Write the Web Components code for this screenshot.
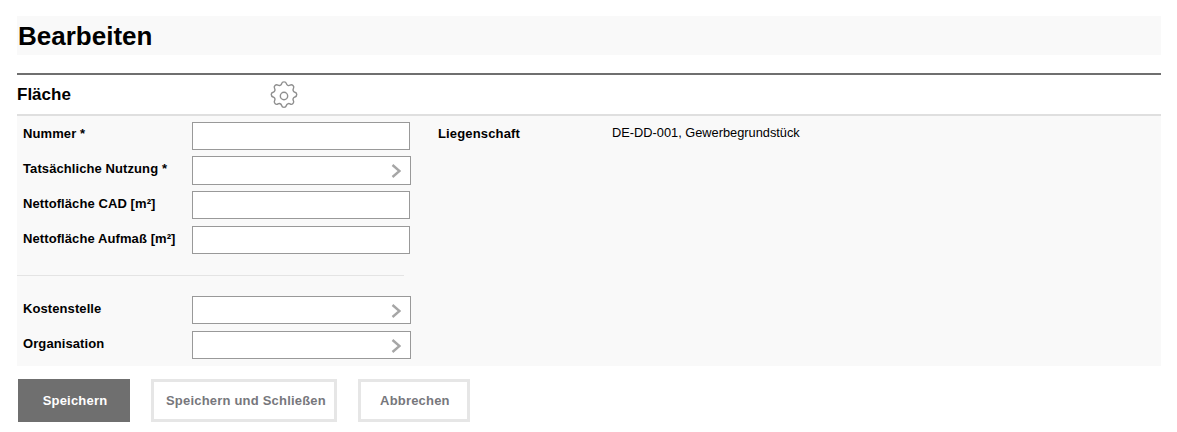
<!DOCTYPE html>
<html lang="de">
<head>
<meta charset="utf-8">
<title>Bearbeiten</title>
<style>
html, body { margin: 0; background: #fff; }
body { font-family: "Liberation Sans", Arial, sans-serif; color: #000; }
</style>
</head>
<body>
<edit-page>
    <page-title>Bearbeiten</page-title>
    <section-head>Fläche</section-head>
    <form-panel>
        <div slot="main">
            <form-field label="Nummer *" style="--top:4px"></form-field>
            <form-field label="Tatsächliche Nutzung *" picker style="--h:29px"></form-field>
            <form-field label="Nettofläche CAD [m²]" style="--gap:7px"></form-field>
            <form-field label="Nettofläche Aufmaß [m²]"></form-field>
        </div>
        <div slot="extra">
            <form-field label="Kostenstelle" picker style="--gap:7px"></form-field>
            <form-field label="Organisation" picker></form-field>
        </div>
        <info-row slot="side" label="Liegenschaft">DE-DD-001, Gewerbegrundstück</info-row>
    </form-panel>
    <button-bar>
        <action-button primary>Speichern</action-button>
        <action-button style="--pr:8px">Speichern und Schließen</action-button>
        <action-button>Abbrechen</action-button>
    </button-bar>
</edit-page>
<script>
    // small helper so every element below stays a few lines
    const shadow = (el, html) => el.attachShadow({ mode: "open" }).innerHTML = html;

    customElements.define("edit-page", class extends HTMLElement {
        constructor() {
            super();
            shadow(this, `<style>:host{display:block;box-sizing:border-box;width:1144px;margin-left:17px;padding-top:16px}</style><slot></slot>`);
        }
    });

    customElements.define("page-title", class extends HTMLElement {
        constructor() {
            super();
            shadow(this, `<style>
                :host{display:block;height:39px;background:#f9f9f9;padding-left:1px;margin-bottom:18px;
                    font-size:26px;font-weight:700;line-height:41px;box-sizing:border-box}
            </style><slot></slot>`);
        }
    });

    customElements.define("section-head", class extends HTMLElement {
        constructor() {
            super();
            shadow(this, `<style>
                :host{display:block;box-sizing:border-box;height:43px;border-top:2px solid #6f6f6f;border-bottom:2px solid #dfdfdf}
                .row{display:flex;align-items:center;height:39px}
                .name{width:250px;font-size:17px;font-weight:700}
                svg{display:block;width:34px;height:34px;margin-top:2px}
            </style>
            <div class="row">
                <div class="name"><slot></slot></div>
                <svg viewBox="0 0 24 24" fill="none" stroke="#8f8f8f" stroke-width="1" stroke-linecap="round" stroke-linejoin="round">
                    <path d="M10.33 3.32c.43-1.76 2.92-1.76 3.35 0a1.72 1.72 0 0 0 2.57 1.07c1.54-.94 3.3.83 2.37 2.37a1.72 1.72 0 0 0 1.06 2.57c1.76.43 1.76 2.92 0 3.35a1.72 1.72 0 0 0-1.07 2.57c.94 1.54-.83 3.3-2.37 2.37a1.72 1.72 0 0 0-2.57 1.06c-.43 1.76-2.92 1.76-3.35 0a1.72 1.72 0 0 0-2.57-1.07c-1.54.94-3.3-.83-2.37-2.37a1.72 1.72 0 0 0-1.06-2.57c-1.76-.43-1.76-2.92 0-3.35a1.72 1.72 0 0 0 1.07-2.57c-.94-1.54.83-3.3 2.37-2.37.99.6 2.28.07 2.57-1.06z"/>
                    <circle cx="12" cy="12" r="2.6"/>
                </svg>
            </div>`);
        }
    });

    customElements.define("form-panel", class extends HTMLElement {
        constructor() {
            super();
            shadow(this, `<style>
                :host{display:flex;box-sizing:border-box;height:250px;background:#f9f9f9;padding-top:6px}
                .left{width:421px;flex:none}
                hr{width:387px;height:1px;margin:21px 0 20px;border:0;background:#e4e4e4}
                .right{flex:1}
            </style>
            <div class="left">
                <slot name="main"></slot>
                <hr>
                <slot name="extra"></slot>
            </div>
            <div class="right"><slot name="side"></slot></div>`);
        }
    });

    customElements.define("form-field", class extends HTMLElement {
        constructor() {
            super();
            const picker = this.hasAttribute("picker");
            shadow(this, `<style>
                :host{display:flex;margin-bottom:var(--gap,6px);padding-left:6px;font-size:13px}
                label{width:169px;flex:none;font-weight:700;line-height:15px;padding-top:var(--top,5px);letter-spacing:.09px}
                .box{box-sizing:border-box;width:218px;height:var(--h,28px);border:1px solid #999;background:#fff;display:flex;align-items:center;justify-content:flex-end}
                .box.picker{width:219px}
                svg{display:block;width:10px;height:14px;margin-right:9px;margin-top:1px}
            </style>
            <label></label>
            <div class="box${picker ? " picker" : ""}">${picker ? `<svg viewBox="0 0 10 14" fill="none" stroke="#a6a6a6" stroke-width="2.4"><path d="M1.5 1 8.5 7 1.5 13"/></svg>` : ""}</div>`);
            this.shadowRoot.querySelector("label").textContent = this.getAttribute("label");
        }
    });

    customElements.define("info-row", class extends HTMLElement {
        constructor() {
            super();
            shadow(this, `<style>
                :host{display:flex;font-size:13px;line-height:15px;padding-top:4px}
                b{width:174px;flex:none;letter-spacing:.15px}
                span{font-size:12.8px;margin-top:-1px}
            </style><b></b><span><slot></slot></span>`);
            this.shadowRoot.querySelector("b").textContent = this.getAttribute("label");
        }
    });

    customElements.define("button-bar", class extends HTMLElement {
        constructor() {
            super();
            shadow(this, `<style>:host{display:flex;gap:21px;padding:13px 0 0 1px}</style><slot></slot>`);
        }
    });

    customElements.define("action-button", class extends HTMLElement {
        constructor() {
            super();
            const primary = this.hasAttribute("primary");
            shadow(this, `<style>
                :host{display:block;box-sizing:border-box;height:43px;min-width:112px;padding:0 var(--pr,10px) 0 12px;
                    border:3px solid ${primary ? "#6f6f6f" : "#e6e6e6"};background:${primary ? "#6f6f6f" : "#fff"};
                    color:${primary ? "#fff" : "#77777c"};font-size:13px;font-weight:700;letter-spacing:.2px;
                    line-height:37px;text-align:center;white-space:nowrap}
            </style><slot></slot>`);
        }
    });
</script>
</body>
</html>
